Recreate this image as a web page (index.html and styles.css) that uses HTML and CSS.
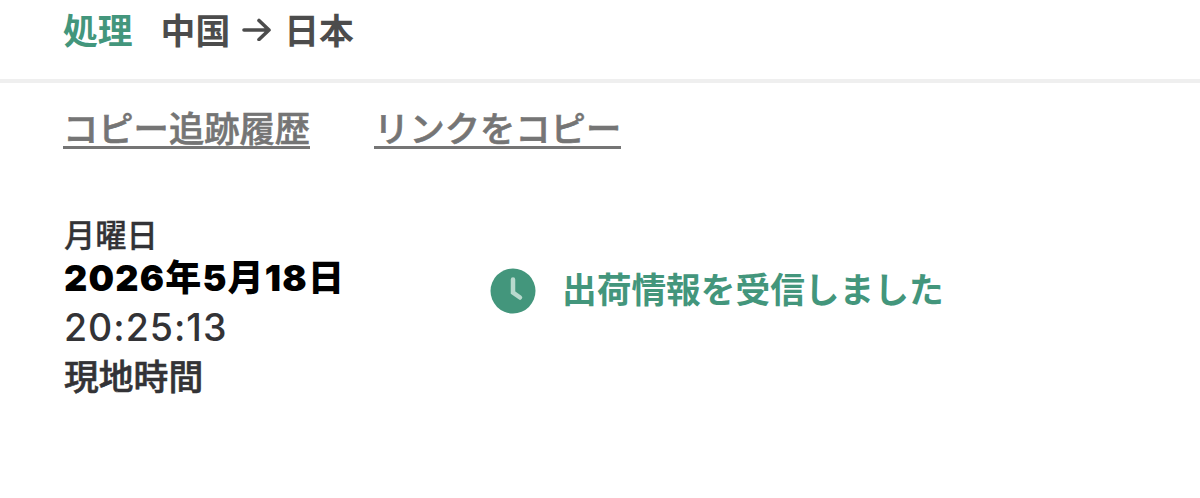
FILE: index.html
```html
<!DOCTYPE html>
<html lang="ja">
<head>
  <meta charset="UTF-8">
  <title>追跡</title>
  <link rel="stylesheet" href="styles.css">
</head>
<body>
  <header class="summary">
    <span class="status">処理</span>
    <span class="route">中国
      <svg class="arrow" viewBox="0 0 30 24"><path d="M2 13H27M17 3.500L27 13L17 22.500"/></svg>
      日本</span>
  </header>

  <nav class="actions">
    <a class="action" href="#">コピー追跡履歴</a>
    <a class="action" href="#">リンクをコピー</a>
  </nav>

  <main class="event">
    <div class="when">
      <div class="weekday">月曜日</div>
      <div class="date">2026年5月18日</div>
      <div class="time">20:25:13</div>
      <div class="zone">現地時間</div>
    </div>
    <svg class="clock" viewBox="0 0 46 46">
      <circle cx="23" cy="23" r="22.5"/>
      <path d="M23 11.500V24.500L30 29.500"/>
    </svg>
    <div class="message">出荷情報を受信しました</div>
  </main>
</body>
</html>
```

FILE: styles.css
```css
body {
  margin: 0;
  background: #fff;
  font-family: Inter, "Noto Sans CJK JP", sans-serif;
  color: #333336;
}

.summary {
  display: flex;
  align-items: center;
  gap: 28px;
  box-sizing: border-box;
  height: 83px;
  padding: 0 63px 21px;
  border-bottom: 4px solid #efefef;
  font-size: 34.8px;
  font-weight: 700;
}

.status {
  color: #43967c;
}

.route {
  display: flex;
  align-items: center;
  gap: 12px;
  color: #4c4c4c;
}

.arrow {
  width: 30px;
  height: 24px;
  fill: none;
  stroke: #4c4c4c;
  stroke-width: 3.6;
  stroke-linecap: round;
  stroke-linejoin: round;
}

.actions {
  display: flex;
  gap: 64px;
  padding: 25px 63px 0;
}

.action {
  height: 38px;
  line-height: 44px;
  border-bottom: 3px solid #757575;
  color: #757575;
  font-size: 35.3px;
  font-weight: 500;
  text-decoration: none;
  -webkit-text-stroke: 0.6px;
}

.event {
  display: flex;
  align-items: flex-start;
  padding: 66px 64px 0;
}

.when {
  width: 426px;
}

.weekday {
  height: 42px;
  line-height: 42px;
  font-size: 31.3px;
  font-weight: 500;
  -webkit-text-stroke: 0.3px;
}

.date {
  height: 50px;
  line-height: 42px;
  color: #000;
  font-size: 36px;
  font-weight: 900;
  letter-spacing: 1.2px;
}

.time {
  height: 49px;
  line-height: 42px;
  font-size: 37.5px;
  font-weight: 500;
  letter-spacing: 1px;
}

.zone {
  line-height: 42px;
  font-size: 34.8px;
  font-weight: 500;
  -webkit-text-stroke: 0.6px;
}

.clock {
  width: 46px;
  height: 46px;
  margin-top: 53px;
  fill: #43967c;
}

.clock path {
  fill: none;
  stroke: #b9dace;
  stroke-width: 4.5;
  stroke-linecap: round;
}

.message {
  margin: 54px 0 0 26px;
  line-height: 42px;
  color: #43967c;
  font-size: 34.7px;
  font-weight: 700;
}
```
